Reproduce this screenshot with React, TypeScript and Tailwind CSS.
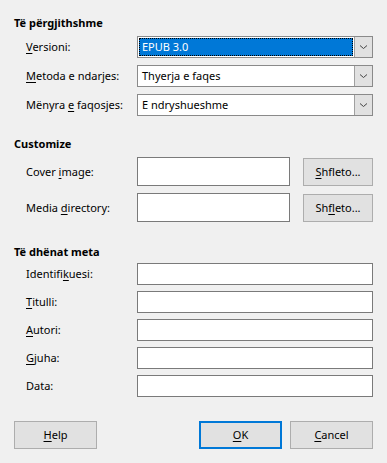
import { ReactNode } from 'react';

function U({ children }: { children: ReactNode }) {
  return <span className="underline underline-offset-2">{children}</span>;
}

function Chevron() {
  return (
    <svg width="9" height="6" viewBox="0 0 9 6" className="text-[#444]">
      <path d="M1 1.5 L4.5 4.5 L8 1.5" fill="none" stroke="currentColor" strokeWidth="1" />
    </svg>
  );
}

function Select({ value, focused }: { value: string; focused?: boolean }) {
  return (
    <div className="flex h-[22px] flex-1 border border-[#8a8a8a] bg-white">
      <div className={focused ? 'flex flex-1 p-[1px]' : 'flex flex-1'}>
        {focused ? (
          <div className="flex flex-1 items-center border border-dotted border-black bg-[#0078d7] pl-[2px] text-white">
            {value}
          </div>
        ) : (
          <div className="flex flex-1 items-center pl-[4px]">{value}</div>
        )}
      </div>
      <div className="flex w-[18px] items-center justify-center border-l border-[#a0a0a0] bg-[#e1e1e1]">
        <Chevron />
      </div>
    </div>
  );
}

function Field({ className }: { className?: string }) {
  return <div className={'border border-[#7a7a7a] bg-white ' + (className ?? '')} />;
}

function Button({ children, primary, className }: { children: ReactNode; primary?: boolean; className?: string }) {
  return (
    <div
      className={
        'flex items-center justify-center bg-[#e1e1e1] ' +
        (primary ? 'border-2 border-[#0078d7] ' : 'border border-[#adadad] ') +
        (className ?? '')
      }
    >
      {children}
    </div>
  );
}

export default function App() {
  return (
    <div
      className="h-[463px] w-[387px] bg-[#f0f0f0] px-[14px] pt-[15px] text-[11px] leading-[16px] text-black"
      style={{ fontFamily: '"Noto Sans", "Open Sans", sans-serif' }}
    >
      <div className="font-bold">Të përgjithshme</div>
      <div className="mt-[5px] flex flex-col gap-[7px] pl-[12px]">
        <div className="flex items-center">
          <div className="w-[111px]"><U>V</U>ersioni:</div>
          <Select value="EPUB 3.0" focused />
        </div>
        <div className="flex items-center">
          <div className="w-[111px]"><U>M</U>etoda e ndarjes:</div>
          <Select value="Thyerja e faqes" />
        </div>
        <div className="flex items-center">
          <div className="w-[111px]">Mënyra <U>e</U> faqosjes:</div>
          <Select value="E ndryshueshme" />
        </div>
      </div>

      <div className="mt-[20px] font-bold">Customize</div>
      <div className="mt-[5px] flex flex-col gap-[7px] pl-[12px]">
        <div className="flex items-center">
          <div className="w-[111px]">Cover <U>i</U>mage:</div>
          <Field className="h-[29px] w-[153px]" />
          <Button className="ml-[13px] h-[28px] flex-1">
            <span><U>S</U>hfleto...</span>
          </Button>
        </div>
        <div className="flex items-center">
          <div className="w-[111px]">Media <U>d</U>irectory:</div>
          <Field className="h-[29px] w-[153px]" />
          <Button className="ml-[13px] h-[28px] flex-1">
            <span>Sh<U>f</U>leto...</span>
          </Button>
        </div>
      </div>

      <div className="mt-[22px] font-bold">Të dhënat meta</div>
      <div className="mt-[3px] flex flex-col gap-[6px] pl-[12px]">
        <div className="flex items-center">
          <div className="w-[111px]">Identifi<U>k</U>uesi:</div>
          <Field className="h-[22px] flex-1" />
        </div>
        <div className="flex items-center">
          <div className="w-[111px]"><U>T</U>itulli:</div>
          <Field className="h-[22px] flex-1" />
        </div>
        <div className="flex items-center">
          <div className="w-[111px]"><U>A</U>utori:</div>
          <Field className="h-[22px] flex-1" />
        </div>
        <div className="flex items-center">
          <div className="w-[111px]"><U>G</U>juha:</div>
          <Field className="h-[22px] flex-1" />
        </div>
        <div className="flex items-center">
          <div className="w-[111px]">Data:</div>
          <Field className="h-[22px] flex-1" />
        </div>
      </div>

      <div className="mt-[24px] flex items-center">
        <Button className="h-[28px] w-[83px]">
          <span><U>H</U>elp</span>
        </Button>
        <Button primary className="ml-auto h-[28px] w-[83px]">
          <span><U>O</U>K</span>
        </Button>
        <Button className="ml-[8px] h-[28px] w-[83px]">
          <span><U>C</U>ancel</span>
        </Button>
      </div>
    </div>
  );
}
